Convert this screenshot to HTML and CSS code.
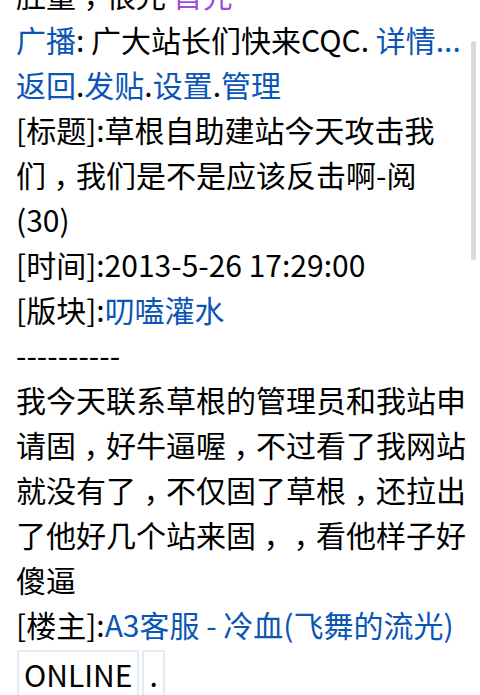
FILE: index.html
```html
<!DOCTYPE html>
<html>
<head>
<meta charset="utf-8">
<link rel="stylesheet" href="styles.css">
</head>
<body>
<div class="page">
  <div class="line">肚量<span class="cm">，</span>很光 <a class="visited" href="#">首先</a></div>
  <div class="line"><a href="#">广播</a>: 广大站长们快来CQC. <a href="#">详情...</a></div>
  <div class="line"><a href="#">返回</a>.<a href="#">发贴</a>.<a href="#">设置</a>.<a href="#">管理</a></div>
  <div class="line">[标题]:草根自助建站今天攻击我们<span class="cm">，</span>我们是不是应该反击啊-阅(30)</div>
  <div class="line">[时间]:2013-5-26 17:29:00</div>
  <div class="line">[版块]:<a href="#">叨嗑灌水</a></div>
  <div class="line">----------</div>
  <div class="line">我今天联系草根的管理员和我站申请固<span class="cm">，</span>好牛逼喔<span class="cm">，</span>不过看了我网站就没有了<span class="cm">，</span>不仅固了草根<span class="cm">，</span>还拉出了他好几个站来固<span class="cm">，</span><span class="cm">，</span>看他样子好傻逼</div>
  <div class="line">[楼主]:<a href="#">A3客服 - 冷血(飞舞的流光)</a></div>
  <div class="cells"><span class="cell">ONLINE</span><span class="cell">.</span></div>
</div>
<div class="scrollbar"></div>
</body>
</html>
```

FILE: styles.css
```css
html, body {
  margin: 0;
  padding: 0;
  background: #ffffff;
  overflow: hidden;
}
body {
  width: 480px;
  height: 695px;
  position: relative;
  font-family: "Noto Sans CJK SC", "Noto Sans", sans-serif;
  font-size: 30px;
  line-height: 45px;
  color: #000000;
}
.page {
  margin-top: -28px;
  padding: 0 12px 0 16px;
}
a {
  color: #0b55b6;
  text-decoration: none;
}
a.visited {
  color: #9b4fd6;
}
.cm {
  font-feature-settings: "halt";
  padding: 0 0.25em;
}
.cells {
  display: flex;
  gap: 3px;
  margin-top: 3px;
  margin-left: 1px;
}
.cell {
  border: 2px solid #e2ebf8;
  padding: 0 5px;
  line-height: 44px;
}
.scrollbar {
  position: absolute;
  right: 4px;
  top: 41px;
  width: 5px;
  height: 219px;
  border-radius: 3px;
  background: #d9d9d9;
}
```
